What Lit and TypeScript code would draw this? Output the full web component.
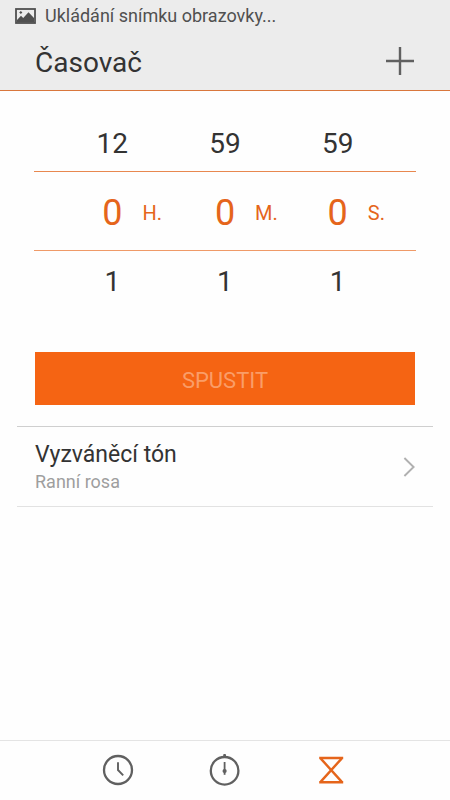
import { LitElement, html, css, svg } from "lit";
import { customElement, property, state } from "lit/decorators.js";
import { classMap } from "lit/directives/class-map.js";

interface Wheel {
  name: string;
  unit: string;
  previous: string;
  value: string;
  next: string;
}

const WHEELS: Wheel[] = [
  { name: "Hodiny", unit: "H.", previous: "12", value: "0", next: "1" },
  { name: "Minuty", unit: "M.", previous: "59", value: "0", next: "1" },
  { name: "Sekundy", unit: "S.", previous: "59", value: "0", next: "1" },
];

const clockIcon = svg`
  <circle cx="16" cy="16" r="14" stroke-width="2.3" />
  <path d="M16 8.2V16l5.2 5.4" stroke-width="1.9" />`;

const stopwatchIcon = svg`
  <circle cx="15.6" cy="16.8" r="13.8" stroke-width="2.3" />
  <path d="M15.6 0v3M14.2 1.8h2.8" stroke-width="2.2" />
  <path d="M15.6 8v12.8" stroke-width="1.8" />
  <circle cx="15.6" cy="17" r="2.1" fill="currentColor" stroke="none" />`;

const hourglassIcon = svg`
  <path d="M3.2 4h24M3.2 28.2h24" stroke-width="2.6" />
  <path d="M4.8 4.6L25.6 27.6M25.6 4.6L4.8 27.6" stroke-width="2.4" />`;

@customElement("timer-picker")
class TimerPicker extends LitElement {
  @property({ attribute: false }) wheels: Wheel[] = [];

  static styles = css`
    :host {
      display: block;
    }
    .row {
      display: grid;
      grid-template-columns: repeat(3, 1fr);
      align-items: center;
      padding: 0 22px;
      color: #333333;
      font-size: 28px;
      line-height: 32px;
      text-align: center;
    }
    .before {
      height: 54px;
    }
    .after {
      height: 62px;
    }
    .row.current {
      height: 78px;
      border-top: 1px solid #e8884f;
      border-bottom: 1px solid #ef9a68;
      color: #e5651b;
    }
    .cell {
      display: grid;
      grid-template-columns: 1fr auto 1fr;
      align-items: center;
      padding-top: 3px;
    }
    .value {
      grid-column: 2;
      font-size: 36px;
      line-height: 40px;
    }
    .unit {
      padding-left: 20px;
      font-size: 20px;
      line-height: 24px;
      text-align: left;
    }
  `;

  render() {
    return html`
      <div class="row before">${this.wheels.map((w) => html`<span>${w.previous}</span>`)}</div>
      <div class="row current">
        ${this.wheels.map(
          (w) => html`<div class="cell" role="group" aria-label=${w.name}>
            <span class="value">${w.value}</span><span class="unit">${w.unit}</span>
          </div>`
        )}
      </div>
      <div class="row after">${this.wheels.map((w) => html`<span>${w.next}</span>`)}</div>
    `;
  }
}

@customElement("app-root")
class AppRoot extends LitElement {
  @state() private tab = "timer";

  static styles = css`
    :host {
      display: flex;
      flex-direction: column;
      min-height: 100vh;
      background: #fefefe;
      color: #333333;
      font-family: Roboto, "Liberation Sans", sans-serif;
    }
    button {
      margin: 0;
      padding: 0;
      border: 0;
      background: none;
      color: inherit;
      font: inherit;
    }
    svg {
      display: block;
      fill: none;
      stroke: currentColor;
    }
    header {
      background: #ececec;
      border-bottom: 1px solid #d9773d;
    }
    .status {
      display: flex;
      align-items: center;
      gap: 9px;
      height: 32px;
      padding: 0 15px;
      color: #505050;
      font-size: 18px;
      line-height: 24px;
    }
    .title {
      display: flex;
      align-items: center;
      justify-content: space-between;
      height: 58px;
      padding: 0 35px;
    }
    h1 {
      margin: 0;
      padding-top: 4px;
      font-size: 28px;
      font-weight: 400;
      line-height: 32px;
    }
    .add {
      color: #606060;
    }
    main {
      flex: 1;
      padding-top: 26px;
    }
    timer-picker {
      margin: 0 34px;
    }
    .start-bar {
      padding: 39px 35px 21px;
    }
    .start {
      display: block;
      width: 100%;
      height: 53px;
      padding-top: 4px;
      background: #f56413;
      color: #fa9d68;
      font-size: 22px;
      line-height: 28px;
    }
    .setting {
      display: flex;
      align-items: center;
      justify-content: space-between;
      margin: 0 17px;
      padding: 12px 18px;
      border-top: 1px solid #cfcfcf;
      border-bottom: 1px solid #e2e2e2;
      color: inherit;
      text-decoration: none;
    }
    .label {
      display: block;
      font-size: 23px;
      line-height: 31px;
    }
    .detail {
      display: block;
      color: #9e9e9e;
      font-size: 18px;
      line-height: 24px;
    }
    .chevron {
      color: #b0b0b0;
    }
    nav {
      display: grid;
      grid-template-columns: repeat(3, 1fr);
      height: 59px;
      padding: 0 65px;
      border-top: 1px solid #e4e4e4;
    }
    .tab {
      display: grid;
      place-items: center;
      padding-bottom: 1px;
      color: #606060;
    }
    .tab.active {
      color: #e5651b;
    }
  `;

  private renderTab(id: string, label: string, icon: unknown) {
    return html`<button
      class=${classMap({ tab: true, active: this.tab === id })}
      aria-label=${label}
      @click=${() => (this.tab = id)}
    >
      <svg width="32" height="32" viewBox="0 0 32 32" aria-hidden="true">${icon}</svg>
    </button>`;
  }

  render() {
    return html`
      <header>
        <div class="status">
          <svg width="21" height="16" viewBox="0 0 21 16" aria-hidden="true">
            <rect x="1" y="1" width="19" height="14" stroke-width="1.8" />
            <path d="M5.8 2.9L7.4 4.5L5.8 6.1L4.2 4.5z" fill="currentColor" stroke="none" />
            <path d="M2 14.5V12l4-4.2L8.2 10l5.3-5.8L19 10v4.5z" fill="currentColor" stroke="none" />
          </svg>
          <span>Ukládání snímku obrazovky...</span>
        </div>
        <div class="title">
          <h1>Časovač</h1>
          <button class="add" aria-label="Přidat">
            <svg width="30" height="30" viewBox="0 0 30 30" aria-hidden="true">
              <path d="M15 1v28M1 15h28" stroke-width="2.4" />
            </svg>
          </button>
        </div>
      </header>
      <main>
        <timer-picker .wheels=${WHEELS}></timer-picker>
        <div class="start-bar"><button class="start">SPUSTIT</button></div>
        <a class="setting" href="#ringtone">
          <span>
            <span class="label">Vyzváněcí tón</span>
            <span class="detail">Ranní rosa</span>
          </span>
          <svg class="chevron" width="12" height="20" viewBox="0 0 12 20" aria-hidden="true">
            <path d="M1.4 1L10.6 10L1.4 19" stroke-width="1.9" />
          </svg>
        </a>
      </main>
      <nav aria-label="Hodiny">
        ${this.renderTab("clock", "Budík", clockIcon)}
        ${this.renderTab("stopwatch", "Stopky", stopwatchIcon)}
        ${this.renderTab("timer", "Časovač", hourglassIcon)}
      </nav>
    `;
  }
}
